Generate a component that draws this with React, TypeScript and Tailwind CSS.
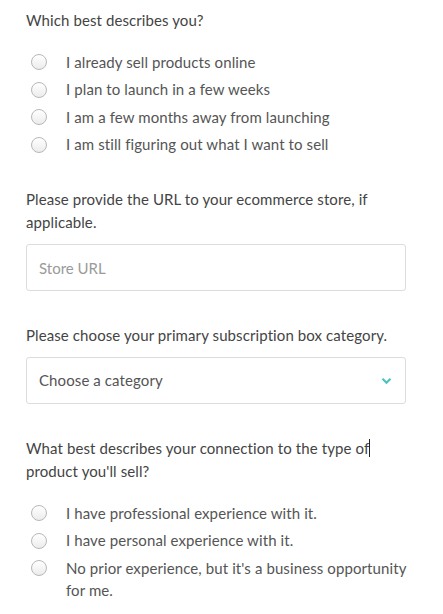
import React, { useState } from 'react';

const font = { fontFamily: 'Lato, "Noto Sans", sans-serif' };

function Radio({ label, checked, onClick }: { label: string; checked: boolean; onClick: () => void }) {
  return (
    <label className="flex items-start cursor-pointer" onClick={onClick}>
      <span className="w-[25px] shrink-0 flex justify-center pt-[6px] ml-[-1px]">
        <span className="w-[16px] h-[16px] rounded-full border border-[#b8b8b8] bg-gradient-to-b from-[#ffffff] to-[#ececec] flex items-center justify-center">
          {checked && <span className="w-[8px] h-[8px] rounded-full bg-[#4fc1c0]" />}
        </span>
      </span>
      <span className="ml-[15px] text-[15px] leading-[22px] py-[2.75px] tracking-[0.1px] text-[#555]">{label}</span>
    </label>
  );
}

export default function App() {
  const [who, setWho] = useState<number | null>(null);
  const [conn, setConn] = useState<number | null>(null);

  const whoOptions = [
    'I already sell products online',
    'I plan to launch in a few weeks',
    'I am a few months away from launching',
    'I am still figuring out what I want to sell',
  ];
  const connOptions = [
    'I have professional experience with it.',
    'I have personal experience with it.',
    "No prior experience, but it's a business opportunity for me.",
  ];

  return (
    <div className="bg-white min-h-[614px] pl-[26px] pt-[9px] text-[#444]" style={font}>
      <div className="w-[380px]">
        {/* Question 1 */}
        <p className="text-[15px] leading-[23px] tracking-[0.1px]">Which best describes you?</p>
        <div className="mt-[16px] pl-[1px]">
          {whoOptions.map((o, i) => (
            <Radio key={o} label={o} checked={who === i} onClick={() => setWho(i)} />
          ))}
        </div>

        {/* Question 2 */}
        <p className="mt-[30px] text-[15px] leading-[23px] tracking-[0.1px]">
          Please provide the URL to your ecommerce store, if applicable.
        </p>
        <input
          type="text"
          placeholder="Store URL"
          className="mt-[10px] w-full h-[47px] rounded-[3px] border border-[#dcdcdc] px-[12px] text-[15px] text-[#555] placeholder:text-[#9a9a9a] outline-none"
          style={font}
        />

        {/* Question 3 */}
        <p className="mt-[33px] text-[15px] leading-[23px] tracking-[0.1px]">Please choose your primary subscription box category.</p>
        <div className="mt-[10px] w-full h-[47px] rounded-[3px] border border-[#dcdcdc] px-[12px] flex items-center justify-between">
          <span className="text-[15px] text-[#555] tracking-[0.1px]">Choose a category</span>
          <svg width="11" height="8" viewBox="0 0 11 8" className="mr-[1px]">
            <path d="M1.5 1.8 L5.5 5.8 L9.5 1.8" fill="none" stroke="#4fc1c0" strokeWidth="2.2" />
          </svg>
        </div>

        {/* Question 4 */}
        <p className="mt-[33px] text-[15px] leading-[23px] tracking-[0.1px]">
          What best describes your connection to the type of
          <span className="inline-block w-[1px] h-[18px] bg-[#222] align-[-3px]" /> product you'll sell?
        </p>
        <div className="mt-[16px] pl-[1px] w-[390px]">
          {connOptions.map((o, i) => (
            <Radio key={o} label={o} checked={conn === i} onClick={() => setConn(i)} />
          ))}
        </div>
      </div>
    </div>
  );
}
